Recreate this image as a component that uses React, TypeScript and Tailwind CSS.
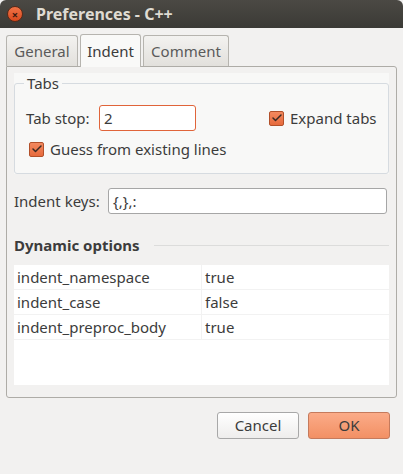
import { Check } from "lucide-react";

const options = [
  { name: "indent_namespace", value: "true" },
  { name: "indent_case", value: "false" },
  { name: "indent_preproc_body", value: "true" },
];

function CheckBox() {
  return (
    <span className="w-[15px] h-[15px] rounded-[2px] border border-[#b2502a] bg-gradient-to-b from-[#f3895f] to-[#e66a3c] flex items-center justify-center shrink-0">
      <Check className="w-[12px] h-[12px] text-[#3a2a24]" strokeWidth={3} />
    </span>
  );
}

export default function App() {
  return (
    <div
      className="w-[403px] h-[474px] bg-[#f2f1f0] overflow-hidden text-[#3c3c3c] text-[15px]"
      style={{ fontFamily: '"Noto Sans", "Open Sans", sans-serif' }}
    >
      {/* title bar */}
      <div className="h-[28px] rounded-t-[6px] bg-gradient-to-b from-[#4b4944] to-[#3b3a36] flex items-center pl-[7px]">
        <div className="w-[16px] h-[16px] rounded-full bg-gradient-to-b from-[#f07346] to-[#d9481c] border border-[#5a2a18] flex items-center justify-center text-[11px] leading-none text-[#3a1a10] font-bold">
          ×
        </div>
        <span className="ml-[13px] text-[16px] font-bold text-[#dfdbd2]">Preferences - C++</span>
      </div>

      <div className="px-[6px]">
        {/* tabs */}
        <div className="h-[38px] flex items-end gap-[2px]">
          <div className="w-[72px] h-[31px] border border-b-0 border-[#b6b4af] rounded-t-[3px] bg-gradient-to-b from-[#f3f2f0] to-[#e2e0dc] flex items-center justify-center text-[#5a5a5a]">
            General
          </div>
          <div className="w-[61px] h-[33px] border border-b-0 border-[#b6b4af] rounded-t-[3px] bg-[#f9f9f8] flex items-center justify-center -mb-px relative z-10">
            Indent
          </div>
          <div className="w-[86px] h-[31px] border border-b-0 border-[#b6b4af] rounded-t-[3px] bg-gradient-to-b from-[#f3f2f0] to-[#e2e0dc] flex items-center justify-center text-[#5a5a5a]">
            Comment
          </div>
        </div>

        {/* panel */}
        <div className="h-[332px] w-[391px] border border-[#aeaca7] rounded-b-[3px] rounded-tr-[3px] px-[7px] pt-[6px]">
          {/* Tabs group */}
          <div className="bg-[#f8f8f7] pt-[10px]">
            <fieldset className="border border-[#d6dbe0] rounded-[3px] h-[91px] px-[11px] relative">
              <legend className="absolute -top-[11px] left-[9px] px-[3px] bg-[#f8f8f7] leading-[20px]">Tabs</legend>
              <div className="flex items-center mt-[21px] h-[26px]">
                <span className="w-[73px]">Tab stop:</span>
                <div className="w-[97px] h-[26px] border border-[#e0643a] rounded-[3px] bg-white flex items-center pl-[4px]">
                  2
                </div>
                <div className="ml-[73px] flex items-center gap-[6px]">
                  <CheckBox />
                  <span>Expand tabs</span>
                </div>
              </div>
              <div className="flex items-center gap-[6px] mt-[7px] ml-[3px]">
                <CheckBox />
                <span>Guess from existing lines</span>
              </div>
            </fieldset>
          </div>

          {/* indent keys */}
          <div className="flex items-center mt-[14px]">
            <span className="w-[94px]">Indent keys:</span>
            <div className="w-[279px] h-[26px] border border-[#a6a6a6] rounded-[3px] bg-white flex items-center pl-[4px]">
              {"{,},:"}
            </div>
          </div>

          {/* dynamic options */}
          <div className="flex items-center mt-[20px] h-[22px]">
            <span className="font-bold whitespace-nowrap">Dynamic options</span>
            <div className="flex-1 ml-[14px] h-px bg-[#dcdcdb]" />
          </div>

          <div className="mt-[9px] w-[375px] h-[120px] bg-white">
            {options.map((o) => (
              <div key={o.name} className="flex h-[25px] border-b border-[#f2f2f2]">
                <div className="w-[188px] border-r border-[#f2f2f2] pl-[3px] flex items-center">{o.name}</div>
                <div className="pl-[3px] flex items-center">{o.value}</div>
              </div>
            ))}
          </div>
        </div>

        {/* buttons */}
        <div className="flex justify-end gap-[9px] mt-[14px] pr-[7px]">
          <button className="w-[82px] h-[27px] border border-[#a8a8a8] rounded-[3px] bg-gradient-to-b from-[#ffffff] to-[#eeedec] text-[#3c3c3c]">
            Cancel
          </button>
          <button className="w-[82px] h-[27px] border border-[#c57a5c] rounded-[3px] bg-gradient-to-b from-[#fbab88] to-[#f29064] text-[#3c3c3c]">
            OK
          </button>
        </div>
      </div>
    </div>
  );
}
